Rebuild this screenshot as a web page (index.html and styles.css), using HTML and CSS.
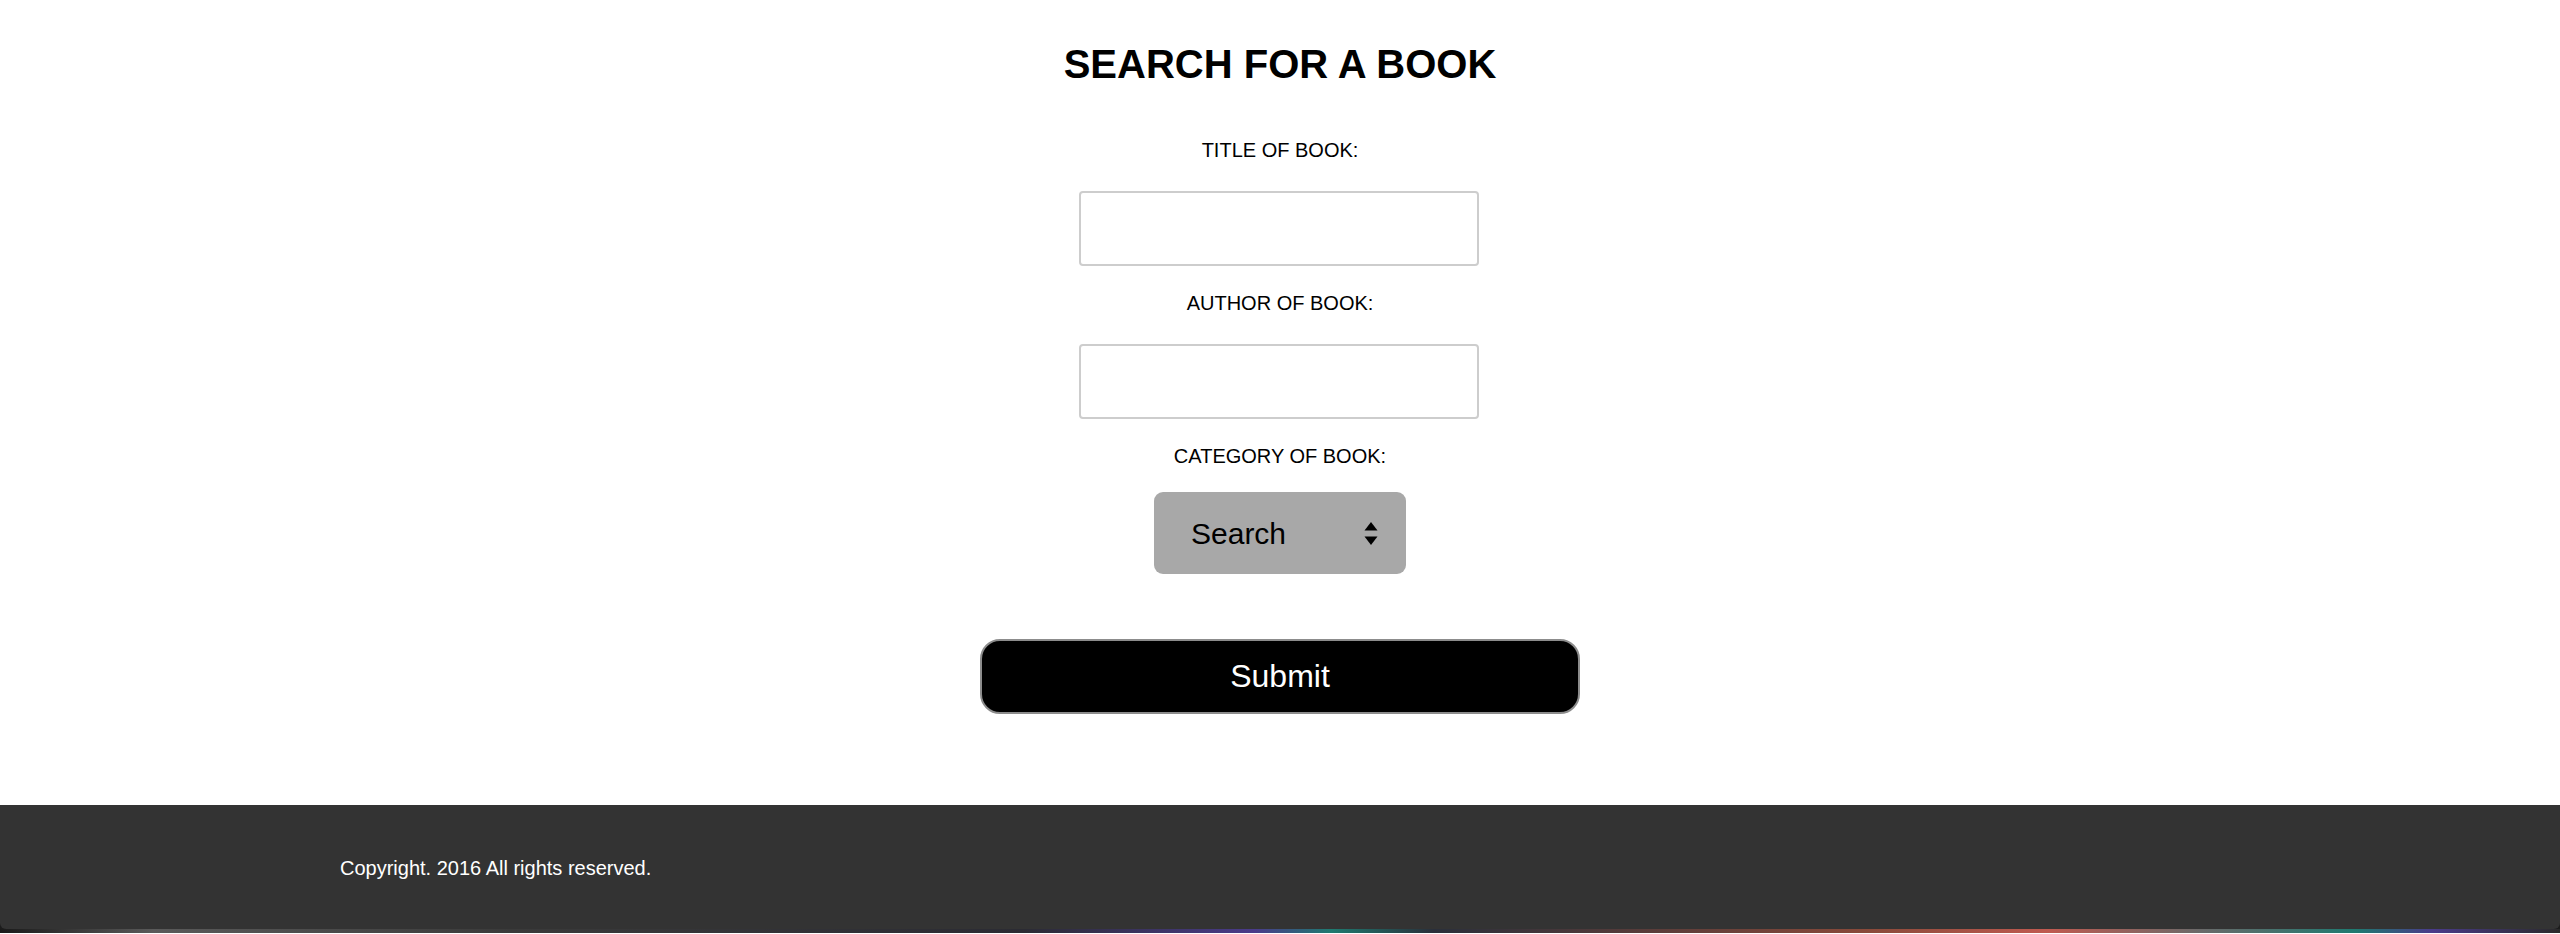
FILE: index.html
```html
<!DOCTYPE html>
<html lang="en">
<head>
<meta charset="utf-8">
<title>Search for a Book</title>
<link rel="stylesheet" href="styles.css">
</head>
<body>
<main class="search">
  <h1 class="search__title">SEARCH FOR A BOOK</h1>
  <form class="search__form">
    <label class="field-label" for="title">TITLE OF BOOK:</label>
    <input class="field-input" id="title" type="text">
    <label class="field-label" for="author">AUTHOR OF BOOK:</label>
    <input class="field-input" id="author" type="text">
    <label class="field-label" for="category">CATEGORY OF BOOK:</label>
    <div class="select-wrap">
      <select class="field-select" id="category">
        <option>Search</option>
      </select>
      <svg class="select-arrows" width="14" height="24" viewBox="0 0 14 24" aria-hidden="true">
        <path d="M7 0 L13.5 8.5 L0.5 8.5 Z" fill="#000"/>
        <path d="M0.5 14.5 L13.5 14.5 L7 23 Z" fill="#000"/>
      </svg>
    </div>
    <button class="submit-btn" type="button">Submit</button>
  </form>
</main>
<div class="page-bottom">
  <footer class="site-footer">
    <p class="site-footer__text">Copyright. 2016 All rights reserved.</p>
  </footer>
  <div class="desktop-strip"></div>
</div>
</body>
</html>
```

FILE: styles.css
```css
* {
  box-sizing: border-box;
}

html, body {
  margin: 0;
  padding: 0;
  background: #fff;
}

body {
  font-family: "Liberation Sans", Arial, Helvetica, sans-serif;
  color: #000;
}

.search {
  text-align: center;
  padding-bottom: 91px;
}

.search__title {
  margin: 41px 0 0;
  font-size: 40px;
  line-height: 46px;
  font-weight: 700;
}

.search__form {
  margin: 52px 0 0;
  display: flex;
  flex-direction: column;
  align-items: center;
}

.field-label {
  display: block;
  font-size: 20px;
  line-height: 23px;
  margin-top: 26px;
}

.field-label:first-child {
  margin-top: 0;
}

.field-input {
  display: block;
  margin: 29px 3px 0 0;
  width: 400px;
  height: 75px;
  border: 2px solid #cdcdcd;
  border-radius: 4px;
  background: #fff;
  padding: 0 12px;
  font-size: 20px;
  font-family: inherit;
}

.select-wrap {
  position: relative;
  margin-top: 24px;
  width: 252px;
  height: 82px;
}

.field-select {
  appearance: none;
  -webkit-appearance: none;
  display: block;
  width: 100%;
  height: 100%;
  border: none;
  border-radius: 9px;
  background: #a8a8a8;
  color: #000;
  font-family: "Liberation Sans", Arial, Helvetica, sans-serif;
  font-size: 30px;
  padding: 0 0 0 37px;
  text-align: left;
}

.select-arrows {
  position: absolute;
  right: 28px;
  top: 30px;
  pointer-events: none;
}

.submit-btn {
  display: block;
  margin-top: 65px;
  width: 600px;
  height: 75px;
  background: #000;
  color: #fff;
  border: 2px solid #8c8c8c;
  border-radius: 20px;
  font-family: "Liberation Sans", Arial, Helvetica, sans-serif;
  font-size: 32px;
  padding: 0;
  cursor: pointer;
}

.page-bottom {
  background: #1c1c1c;
}

.site-footer {
  height: 124px;
  background: #333;
  display: flex;
  align-items: center;
  padding: 2px 0 0 340px;
  border-radius: 0 0 6px 6px;
}

.site-footer__text {
  margin: 0;
  color: #fff;
  font-size: 20px;
  line-height: 23px;
}

.desktop-strip {
  height: 4px;
  background: linear-gradient(90deg,
    #1a1a1a 0%, #5a5a5a 6%, #3a3a3a 20%, #2b2b33 40%,
    #4a3b8a 49%, #1f7a70 52%, #2a2f3a 56%, #8a4a3a 73%,
    #c05a50 80%, #6a6a6a 86%, #1f7a70 92%, #4a3b8a 95%, #2a2a2a 100%);
}
```
